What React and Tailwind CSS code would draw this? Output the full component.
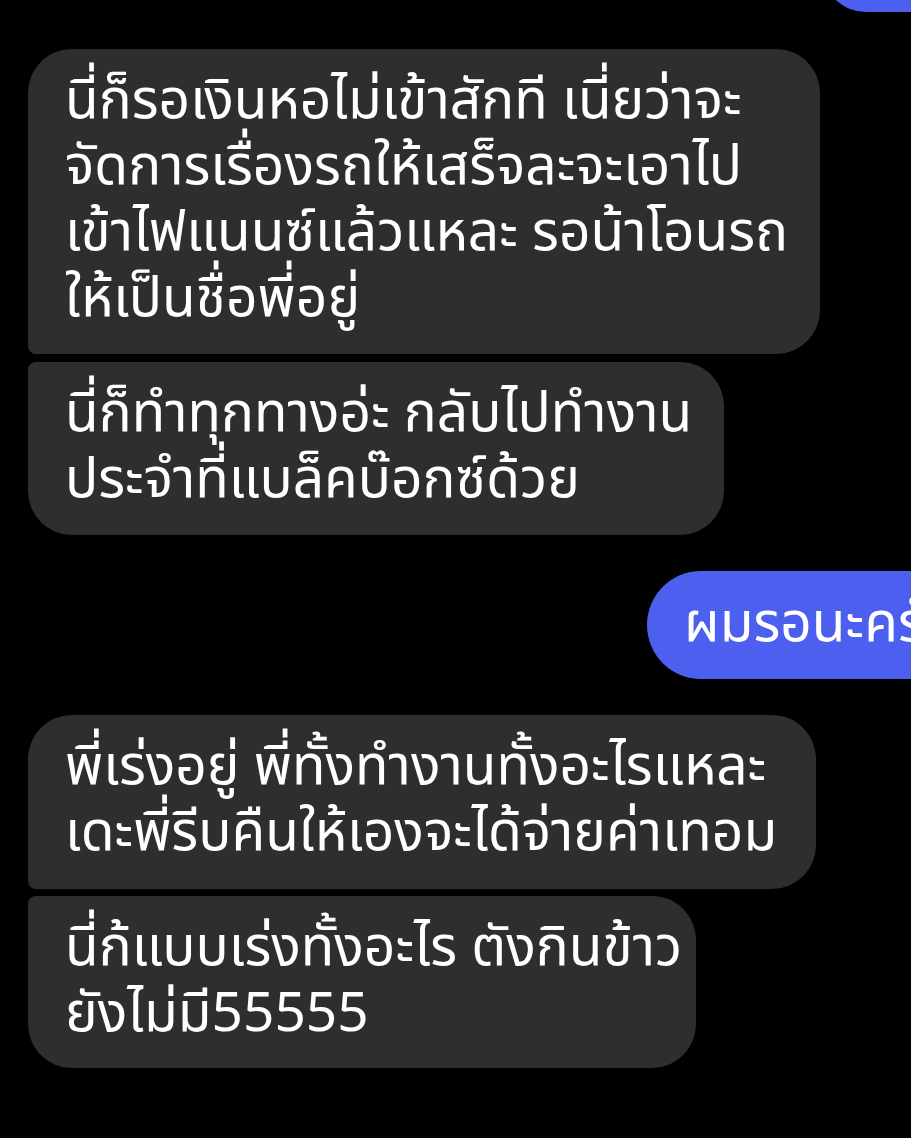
import React from "react";

const font = { fontFamily: '"Noto Sans Thai", Thonburi, Garuda, Loma, "Noto Sans", "DejaVu Sans", sans-serif' };

function Gray({ lines, w, r, pb }) {
  return (
    <div
      className={`bg-[#2e2e2e] text-white text-[55px] leading-[66px] pl-[37px] pt-[20px] whitespace-nowrap ${r} ${pb}`}
      style={{ width: w }}
    >
      {lines.map((l, i) => (
        <div key={i}>{l}</div>
      ))}
    </div>
  );
}

export default function App() {
  return (
    <div className="w-[911px] h-[1138px] bg-black overflow-hidden" style={font}>
      <div className="flex flex-col">
        <div className="ml-[822px] -mt-[96px] h-[108px] w-[200px] bg-[#4d5fef] rounded-l-[44px] shrink-0" />
        <div className="pl-[28px] mt-[37px] flex flex-col gap-[8px]">
          <Gray
            w="792px"
            pb="pb-[21px]"
            r="rounded-tl-[44px] rounded-r-[44px] rounded-bl-[8px]"
            lines={[
              "นี่ก็รอเงินหอไม่เข้าสักที เนี่ยว่าจะ",
              "จัดการเรื่องรถให้เสร็จละจะเอาไป",
              "เข้าไฟแนนซ์แล้วแหละ รอน้าโอนรถ",
              "ให้เป็นชื่อพี่อยู่",
            ]}
          />
          <Gray
            w="696px"
            pb="pb-[21px]"
            r="rounded-tl-[8px] rounded-r-[44px] rounded-bl-[44px]"
            lines={["นี่ก็ทำทุกทางอ่ะ กลับไปทำงาน", "ประจำที่แบล็คบ๊อกซ์ด้วย"]}
          />
        </div>
        <div className="mt-[36px] ml-[647px] w-[340px] shrink-0 bg-[#4d5fef] rounded-l-[54px] h-[108px] pl-[37px] pt-[21px] text-white text-[55px] leading-[66px] whitespace-nowrap">
          ผมรอนะครับ
        </div>
        <div className="pl-[28px] mt-[36px] flex flex-col gap-[7px]">
          <Gray
            w="788px"
            pb="pb-[22px]"
            r="rounded-tl-[44px] rounded-r-[44px] rounded-bl-[8px]"
            lines={["พี่เร่งอยู่ พี่ทั้งทำงานทั้งอะไรแหละ", "เดะพี่รีบคืนให้เองจะได้จ่ายค่าเทอม"]}
          />
          <Gray
            w="668px"
            pb="pb-[20px]"
            r="rounded-tl-[8px] rounded-r-[44px] rounded-bl-[44px]"
            lines={["นี่ก้แบบเร่งทั้งอะไร ตังกินข้าว", "ยังไม่มี55555"]}
          />
        </div>
      </div>
    </div>
  );
}
